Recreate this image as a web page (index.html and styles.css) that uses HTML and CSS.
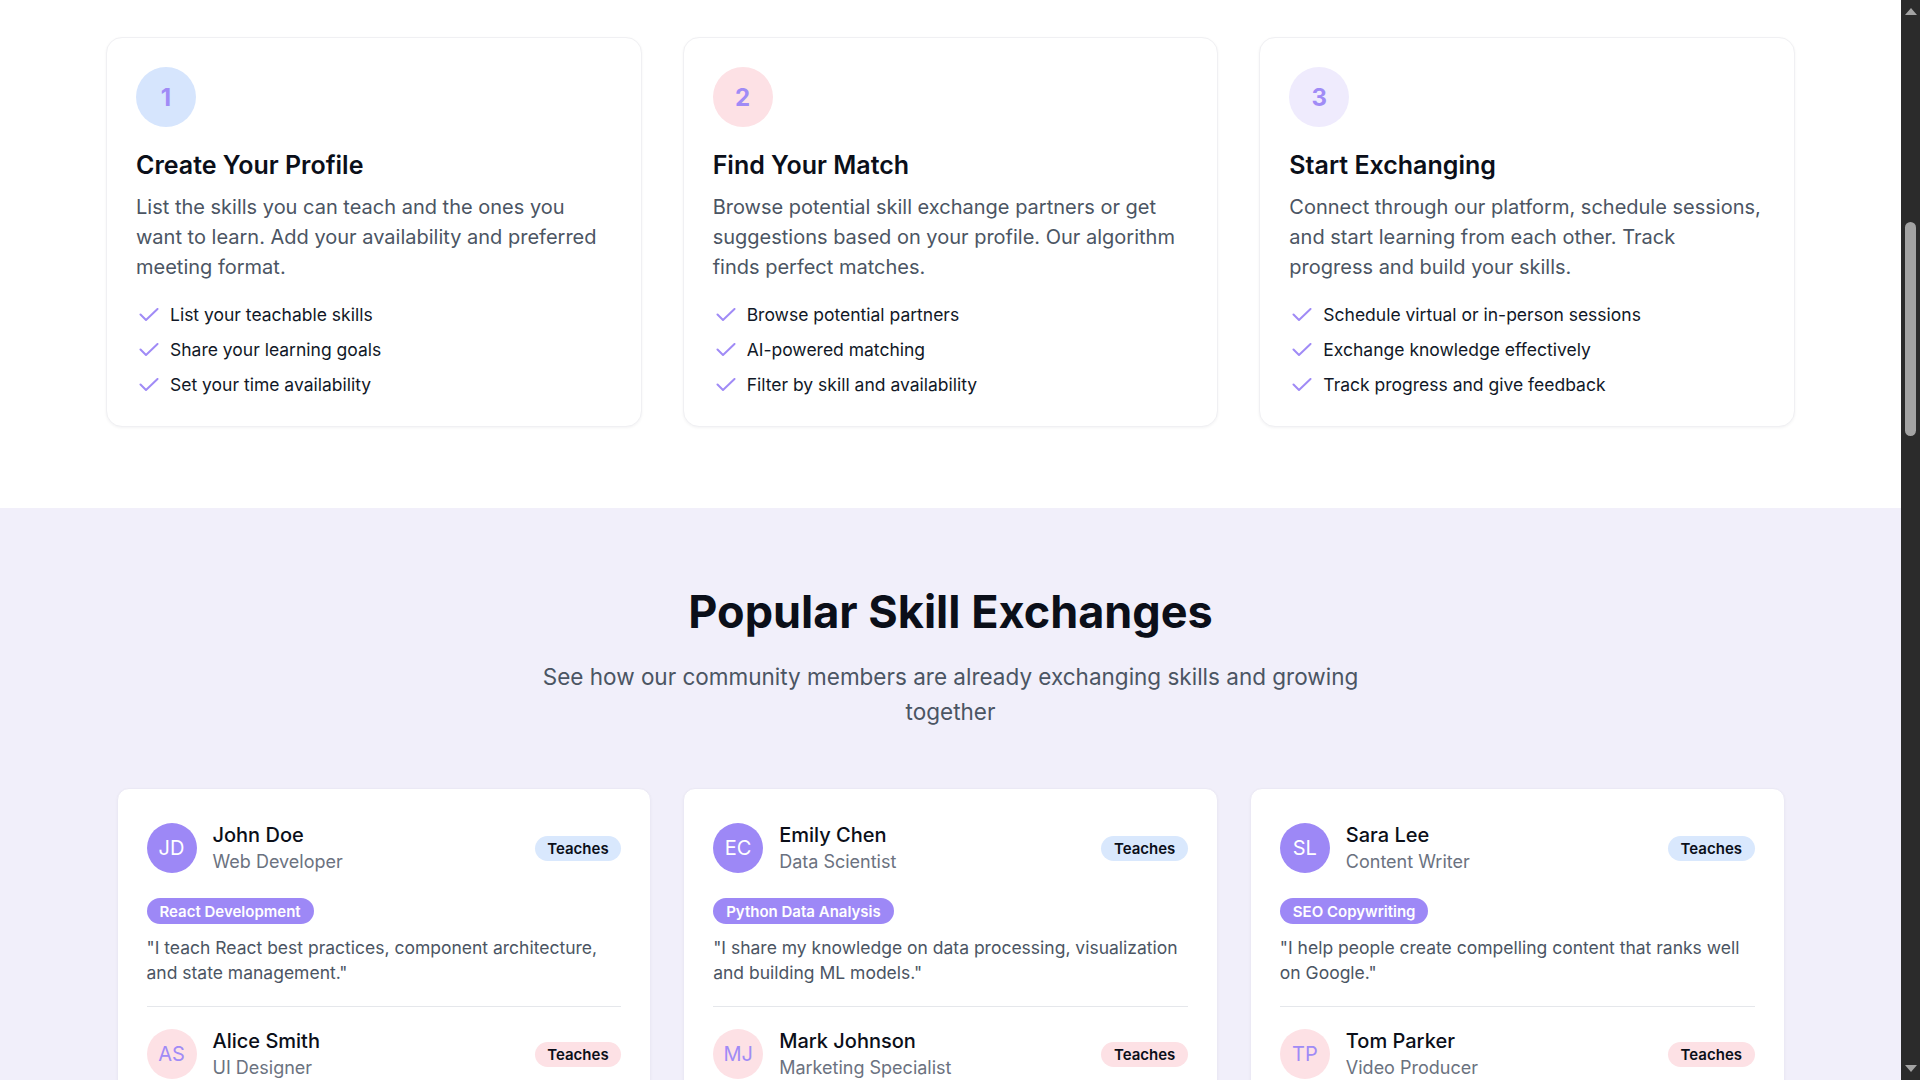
FILE: index.html
```html
<!DOCTYPE html>
<html lang="en">
<head>
<meta charset="utf-8">
<title>Skill Exchange</title>
<link rel="stylesheet" href="styles.css">
</head>
<body>
<div class="page">
  <section class="steps">
    <div class="steps-grid">
      <div class="step-card">
        <div class="step-num num-blue">1</div>
        <h3 class="step-title">Create Your Profile</h3>
        <p class="step-desc">List the skills you can teach and the ones you want to learn. Add your availability and preferred meeting format.</p>
        <ul class="checks">
          <li><svg class="check" viewBox="0 0 20 14" aria-hidden="true"><path d="M1.5 6.5 L7 12 L18.5 1"/></svg>List your teachable skills</li>
          <li><svg class="check" viewBox="0 0 20 14" aria-hidden="true"><path d="M1.5 6.5 L7 12 L18.5 1"/></svg>Share your learning goals</li>
          <li><svg class="check" viewBox="0 0 20 14" aria-hidden="true"><path d="M1.5 6.5 L7 12 L18.5 1"/></svg>Set your time availability</li>
        </ul>
      </div>
      <div class="step-card">
        <div class="step-num num-pink">2</div>
        <h3 class="step-title">Find Your Match</h3>
        <p class="step-desc">Browse potential skill exchange partners or get suggestions based on your profile. Our algorithm finds perfect matches.</p>
        <ul class="checks">
          <li><svg class="check" viewBox="0 0 20 14" aria-hidden="true"><path d="M1.5 6.5 L7 12 L18.5 1"/></svg>Browse potential partners</li>
          <li><svg class="check" viewBox="0 0 20 14" aria-hidden="true"><path d="M1.5 6.5 L7 12 L18.5 1"/></svg>AI-powered matching</li>
          <li><svg class="check" viewBox="0 0 20 14" aria-hidden="true"><path d="M1.5 6.5 L7 12 L18.5 1"/></svg>Filter by skill and availability</li>
        </ul>
      </div>
      <div class="step-card">
        <div class="step-num num-violet">3</div>
        <h3 class="step-title">Start Exchanging</h3>
        <p class="step-desc">Connect through our platform, schedule sessions, and start learning from each other. Track progress and build your skills.</p>
        <ul class="checks">
          <li><svg class="check" viewBox="0 0 20 14" aria-hidden="true"><path d="M1.5 6.5 L7 12 L18.5 1"/></svg>Schedule virtual or in-person sessions</li>
          <li><svg class="check" viewBox="0 0 20 14" aria-hidden="true"><path d="M1.5 6.5 L7 12 L18.5 1"/></svg>Exchange knowledge effectively</li>
          <li><svg class="check" viewBox="0 0 20 14" aria-hidden="true"><path d="M1.5 6.5 L7 12 L18.5 1"/></svg>Track progress and give feedback</li>
        </ul>
      </div>
    </div>
  </section>

  <section class="popular">
    <h2 class="popular-title">Popular Skill Exchanges</h2>
    <p class="popular-sub">See how our community members are already exchanging skills and growing together</p>
    <div class="ex-grid">
      <div class="ex-card">
        <div class="entry">
          <div class="entry-head">
            <div class="avatar av-purple">JD</div>
            <div class="who"><div class="name">John Doe</div><div class="role">Web Developer</div></div>
            <span class="badge badge-blue">Teaches</span>
          </div>
          <span class="skill">React Development</span>
          <p class="quote">"I teach React best practices, component architecture, and state management."</p>
        </div>
        <div class="entry">
          <div class="entry-head">
            <div class="avatar av-pink">AS</div>
            <div class="who"><div class="name">Alice Smith</div><div class="role">UI Designer</div></div>
            <span class="badge badge-pink">Teaches</span>
          </div>
        </div>
      </div>
      <div class="ex-card">
        <div class="entry">
          <div class="entry-head">
            <div class="avatar av-purple">EC</div>
            <div class="who"><div class="name">Emily Chen</div><div class="role">Data Scientist</div></div>
            <span class="badge badge-blue">Teaches</span>
          </div>
          <span class="skill">Python Data Analysis</span>
          <p class="quote">"I share my knowledge on data processing, visualization and building ML models."</p>
        </div>
        <div class="entry">
          <div class="entry-head">
            <div class="avatar av-pink">MJ</div>
            <div class="who"><div class="name">Mark Johnson</div><div class="role">Marketing Specialist</div></div>
            <span class="badge badge-pink">Teaches</span>
          </div>
        </div>
      </div>
      <div class="ex-card">
        <div class="entry">
          <div class="entry-head">
            <div class="avatar av-purple">SL</div>
            <div class="who"><div class="name">Sara Lee</div><div class="role">Content Writer</div></div>
            <span class="badge badge-blue">Teaches</span>
          </div>
          <span class="skill">SEO Copywriting</span>
          <p class="quote">"I help people create compelling content that ranks well on Google."</p>
        </div>
        <div class="entry">
          <div class="entry-head">
            <div class="avatar av-pink">TP</div>
            <div class="who"><div class="name">Tom Parker</div><div class="role">Video Producer</div></div>
            <span class="badge badge-pink">Teaches</span>
          </div>
        </div>
      </div>
    </div>
  </section>
</div>
<div class="scrollbar" aria-hidden="true">
  <div class="sb-arrow sb-up"></div>
  <div class="sb-thumb"></div>
  <div class="sb-space"></div>
  <div class="sb-arrow sb-down"></div>
</div>
</body>
</html>
```

FILE: styles.css
```css
* { box-sizing: border-box; }
html, body {
  margin: 0;
  padding: 0;
  height: 100%;
  overflow: hidden;
}
body {
  display: flex;
  font-family: Inter, "Noto Sans", "Liberation Sans", sans-serif;
  color: #111827;
  background: #ffffff;
}
.page {
  flex: 1;
  min-width: 0;
  height: 100%;
  overflow: hidden;
}

/* ---------- steps ---------- */
.steps {
  background: #ffffff;
  padding: 37px 0 81px;
}
.steps-grid {
  width: 1689px;
  margin: 0 auto;
  display: grid;
  grid-template-columns: repeat(3, 1fr);
  gap: 41px;
}
.step-card {
  background: #fff;
  border: 1px solid #f0f0f3;
  border-radius: 16px;
  padding: 29px 33px 28px 29px;
  box-shadow: 0 1px 3px rgba(17, 24, 39, 0.05);
}
.step-num {
  width: 60px;
  height: 60px;
  border-radius: 50%;
  display: flex;
  align-items: center;
  justify-content: center;
  font-size: 24px;
  font-weight: 700;
  color: #a08bf6;
}
.num-blue { background: #d6e5fd; }
.num-pink { background: #fde1e5; }
.num-violet { background: #efebfd; }
.step-title {
  margin: 22px 0 11px;
  font-size: 25px;
  line-height: 32px;
  font-weight: 600;
  color: #0b0f19;
}
.step-desc {
  margin: 0 0 19px;
  font-size: 20px;
  line-height: 30px;
  color: #4b5563;
}
.checks {
  list-style: none;
  margin: 0;
  padding: 0;
  display: flex;
  flex-direction: column;
  gap: 8px;
}
.checks li {
  display: flex;
  align-items: center;
  font-size: 17.5px;
  line-height: 27px;
  color: #111827;
}
.check {
  width: 20px;
  height: 14px;
  margin: 0 11px 0 3px;
  flex: none;
  fill: none;
  stroke: #a08bf6;
  stroke-width: 2;
  stroke-linecap: round;
  stroke-linejoin: round;
}

/* ---------- popular ---------- */
.popular {
  background: #f1effa;
  padding: 78px 0 80px;
  text-align: center;
}
.popular-title {
  margin: 0;
  font-size: 45px;
  line-height: 52px;
  font-weight: 700;
  color: #0b0f19;
}
.popular-sub {
  margin: 21px auto 0;
  max-width: 870px;
  font-size: 22.5px;
  line-height: 35px;
  color: #4b5563;
}
.ex-grid {
  width: 1668px;
  margin: 59px auto 0;
  display: grid;
  grid-template-columns: repeat(3, 1fr);
  gap: 32px;
  text-align: left;
}
.ex-card {
  background: #fff;
  border: 1px solid #ebe9f5;
  border-radius: 12px;
  padding: 32px 29px;
  box-shadow: 0 1px 3px rgba(17, 24, 39, 0.04);
}
.entry {
  padding-bottom: 21px;
  border-bottom: 1px solid #e5e7eb;
}
.entry + .entry {
  padding-top: 20px;
}
.entry-head {
  display: flex;
  align-items: center;
  gap: 16px;
}
.avatar {
  width: 50px;
  height: 50px;
  border-radius: 50%;
  flex: none;
  display: flex;
  align-items: center;
  justify-content: center;
  font-size: 20px;
}
.av-purple { background: #9d88f6; color: #ffffff; }
.av-pink { background: #fde1e5; color: #a08bf6; }
.who { flex: 1; min-width: 0; }
.name {
  font-size: 20px;
  line-height: 28px;
  font-weight: 500;
  color: #0b0f19;
}
.role {
  font-size: 18px;
  line-height: 26px;
  color: #6b7280;
}
.badge {
  flex: none;
  height: 25px;
  padding: 0 12.5px;
  border-radius: 999px;
  display: inline-flex;
  align-items: center;
  font-size: 15px;
  font-weight: 600;
  color: #0b0f19;
}
.badge-blue { background: #d9e8fd; }
.badge-pink { background: #fde1e5; }
.skill {
  display: inline-flex;
  align-items: center;
  height: 26px;
  margin-top: 23px;
  padding: 0 13px;
  border-radius: 999px;
  background: #9d88f6;
  color: #ffffff;
  font-size: 15px;
  font-weight: 600;
}
.quote {
  margin: 11px 0 0;
  font-size: 17.5px;
  line-height: 25px;
  color: #4b5563;
}

/* ---------- fake browser scrollbar ---------- */
.scrollbar {
  width: 19px;
  flex: none;
  height: 100%;
  background: #2b2b2b;
  display: flex;
  flex-direction: column;
  align-items: center;
}
.sb-arrow {
  width: 0;
  height: 0;
  border-left: 6px solid transparent;
  border-right: 6px solid transparent;
  flex: none;
}
.sb-up {
  margin-top: 8px;
  border-bottom: 7px solid #a3a3a3;
}
.sb-down {
  margin-bottom: 8px;
  border-top: 7px solid #a3a3a3;
}
.sb-thumb {
  margin-top: 207px;
  width: 11px;
  height: 214px;
  border-radius: 6px;
  background: #a3a3a3;
  flex: none;
}
.sb-space { flex: 1; }
```
